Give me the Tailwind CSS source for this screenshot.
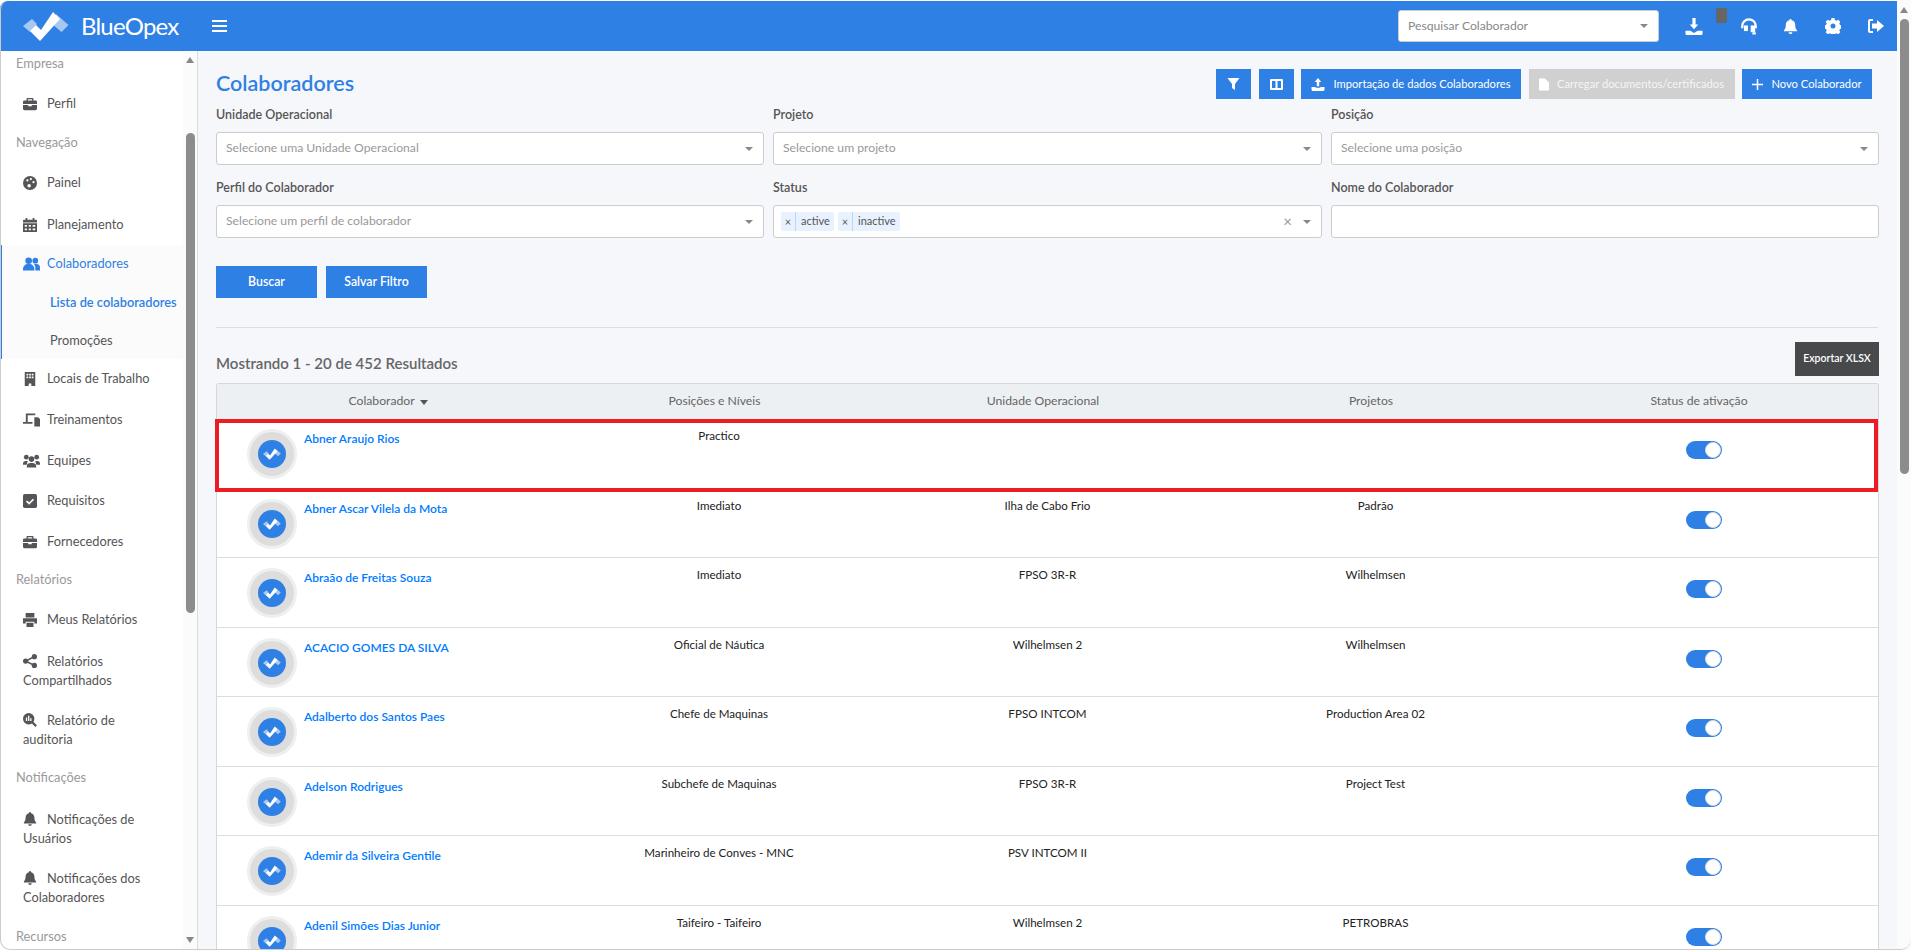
<!DOCTYPE html>
<html lang="pt-BR">
<head>
<meta charset="UTF-8">
<title>Colaboradores</title>
<script src="https://cdn.jsdelivr.net/npm/@tailwindcss/browser@4"></script>
</head>
<body class="relative h-[950px] w-[1911px] overflow-hidden bg-white font-['Lato',sans-serif] text-[12.8px] text-[#555]">
<svg class="hidden">
  <symbol id="logo" viewBox="0 0 46 30">
    <path d="M0 15 L9 8 L14 13 L7 21 Z M33 3 L45.500 14 L38.500 21 L28 12 Z" fill="#a8c8f2"/>
    <path d="M17 30 L7 20 L13 14 L18 19 L30 1 L37 8 Z" fill="#fff"/>
  </symbol>
  <symbol id="bell" viewBox="0 0 16 16"><path d="M8 0a1.200 1.200 0 0 1 1.200 1.300C11.500 1.800 13 3.700 13 6c0 4 1.200 5 2 6v1H1v-1c.8-1 2-2 2-6 0-2.300 1.500-4.200 3.800-4.700A1.200 1.200 0 0 1 8 0zM6 14h4a2 2 0 0 1-4 0z" fill="currentColor"/></symbol>
  <symbol id="case" viewBox="0 0 16 16"><path d="M5 1h6a1 1 0 0 1 1 1v2h2.500A1.500 1.500 0 0 1 16 5.500V8H0V5.500A1.500 1.500 0 0 1 1.500 4H4V2a1 1 0 0 1 1-1zm.500 1.500V4h5V2.500zM0 9h6v1.500h4V9h6v4.500a1.500 1.500 0 0 1-1.500 1.500h-13A1.500 1.500 0 0 1 0 13.500z" fill="currentColor"/></symbol>
</svg>

<header class="mt-px flex h-[50px] items-center rounded-t-lg bg-[#2f80e4] text-white">
  <div class="flex w-[198px] items-center pl-[23px]">
    <svg class="h-[30px] w-[46px]"><use href="#logo"/></svg>
    <span class="ml-[12px] text-[24px] leading-none tracking-[-0.8px]">BlueOpex</span>
  </div>
  <button class="ml-[14px] flex w-[15px] flex-col gap-[3px]">
    <span class="h-[2px] w-[15px] bg-white"></span><span class="h-[2px] w-[15px] bg-white"></span><span class="h-[2px] w-[15px] bg-white"></span>
  </button>
  <div class="ml-[1171px] flex h-[32px] w-[261px] items-center justify-between rounded-[3px] border border-[#ccc] bg-white pl-[9px] pr-[10px] text-[12.2px] text-[#888]">
    <span>Pesquisar Colaborador</span><span class="h-0 w-0 border-x-4 border-t-4 border-x-transparent border-t-[#888]"></span>
  </div>
  <div class="relative ml-[26px] flex items-center">
    <svg class="h-[17px] w-[18px]" viewBox="0 0 16 16" fill="#fff"><path d="M6.500 0h3v6H12L8 10.500 4 6h2.500zM0 12h4.500L8 14l3.500-2H16v3a1 1 0 0 1-1 1H1a1 1 0 0 1-1-1z"/></svg>
    <svg class="ml-[37px] h-[18px] w-[18px]" viewBox="0 0 16 16" fill="none" stroke="#fff" stroke-width="2"><path d="M2 10V8a6 6 0 0 1 12 0v2M11 14.500h3"/><rect x="4" y="8" width="2.500" height="4" fill="#fff" stroke-width="1"/><rect x="10" y="8" width="3" height="5" fill="#fff" stroke-width="1"/></svg>
    <svg class="ml-[25px] h-[17px] w-[15px] text-white"><use href="#bell"/></svg>
    <svg class="ml-[27px] h-[16px] w-[16px]" viewBox="0 0 16 16"><path fill="#fff" fill-rule="evenodd" d="M6.500 0h3l.4 2 1.500.7 1.800-1 2.100 2.100-1 1.800.7 1.500 2 .4v3l-2 .4-.7 1.500 1 1.800-2.100 2.100-1.800-1-1.500.7-.4 2h-3l-.4-2-1.500-.7-1.800 1-2.100-2.100 1-1.800-.7-1.500-2-.4v-3l2-.4.7-1.500-1-1.800 2.100-2.100 1.800 1 1.500-.7zM8 5.500a2.500 2.500 0 1 0 0 5 2.500 2.500 0 0 0 0-5z"/></svg>
    <svg class="ml-[26px] h-[14px] w-[17px]" viewBox="0 0 17 14" fill="#fff"><path d="M6 2H3v10h3v2H3a2 2 0 0 1-2-2V2a2 2 0 0 1 2-2h3zM10 1l7 6-7 6V9.500H5v-5h5z"/></svg>
    <span class="absolute left-[31px] top-[-9px] h-[15px] w-[11px] rounded-b-[2px] bg-[#666]"></span>
  </div>
</header>

<div class="flex h-[899px]">
  <aside class="relative h-full w-[198px] shrink-0 overflow-hidden border-r border-[#ddd] bg-white">
    <nav class="h-full w-[183px] overflow-hidden">
      <p class="flex h-[26px] items-center pl-[16px] text-[#999]">Empresa</p>
      <a class="flex h-[54px] items-center pl-[23px]"><svg class="mr-[10px] h-[14px] w-[14px]"><use href="#case"/></svg>Perfil</a>
      <p class="flex h-[24px] items-center pl-[16px] text-[#999]">Navegação</p>
      <a class="mt-[7px] flex h-[42px] items-center pl-[23px]"><svg class="mr-[10px] h-[14px] w-[14px]" viewBox="0 0 16 16"><circle cx="8" cy="8" r="8" fill="#555"/><circle cx="5" cy="5" r="1.300" fill="#fff"/><circle cx="9" cy="3.500" r="1.300" fill="#fff"/><circle cx="12" cy="7" r="1.300" fill="#fff"/><circle cx="7" cy="11" r="2" fill="#fff"/></svg>Painel</a>
      <a class="flex h-[41px] items-center pl-[23px]"><svg class="mr-[10px] h-[14px] w-[14px]" viewBox="0 0 16 16" fill="#555" fill-rule="evenodd"><path d="M3 0h2v2h6V0h2v2h2a1 1 0 0 1 1 1v2H0V3a1 1 0 0 1 1-1h2zM0 6h16v9a1 1 0 0 1-1 1H1a1 1 0 0 1-1-1zm2 2v2h2.500V8zm4.500 0v2H9V8zM11 8v2h3V8zm-9 4v2h2.500v-2zm4.500 0v2H9v-2zm4.500 0v2h3v-2z"/></svg>Planejamento</a>
      <div class="border-l-2 border-[#2f80e4] bg-[#fbfbfb]">
        <a class="flex h-[38px] items-center pl-[21px] text-[#2f80e4]"><svg class="mr-[7px] h-[14px] w-[17px]" viewBox="0 0 18 14" fill="#2f80e4"><circle cx="6" cy="3.500" r="3.500"/><circle cx="13" cy="3.500" r="3"/><path d="M0 14v-2a5 5 0 0 1 5-5h2a5 5 0 0 1 5 5v2zM13 14v-3c0-1.500-.5-3-1.500-4H14a4 4 0 0 1 4 4v3z"/></svg>Colaboradores</a>
        <a class="flex h-[40px] items-center whitespace-nowrap pl-[48px] font-semibold text-[#2f80e4]">Lista de colaboradores</a>
        <a class="flex h-[36px] items-center pl-[48px]">Promoções</a>
      </div>
      <a class="flex h-[40px] items-center pl-[23px]"><svg class="mr-[10px] h-[14px] w-[14px]" viewBox="0 0 16 16" fill="#555"><path d="M2 0h12v16H9.500v-3h-3v3H2zm2 2v2h2V2zm3 0v2h2V2zm3 0v2h2V2zM4 5v2h2V5zm3 0v2h2V5zm3 0v2h2V5z" fill-rule="evenodd"/></svg>Locais de Trabalho</a>
      <a class="flex h-[41px] items-center pl-[23px]"><svg class="mr-[7px] h-[14px] w-[17px]" viewBox="0 0 18 14" fill="#555"><path d="M3 0h10v2H5v7h5v2H0V9h3zM12 4h4l2 2v8h-6z"/></svg>Treinamentos</a>
      <a class="flex h-[41px] items-center pl-[23px]"><svg class="mr-[7px] h-[14px] w-[17px]" viewBox="0 0 18 14" fill="#555"><circle cx="3.500" cy="3" r="2.500"/><circle cx="14.500" cy="3" r="2.500"/><circle cx="9" cy="5" r="3"/><path d="M0 10a3 3 0 0 1 3-3h2L4 11H0zM4 14v-1a4 4 0 0 1 4-4h2a4 4 0 0 1 4 4v1zM18 10a3 3 0 0 0-3-3h-2l1 4h4z"/></svg>Equipes</a>
      <a class="flex h-[40px] items-center pl-[23px]"><svg class="mr-[10px] h-[14px] w-[14px]" viewBox="0 0 16 16"><rect width="16" height="16" rx="2" fill="#555"/><path d="M4 8l3 3 5-5" fill="none" stroke="#fff" stroke-width="2"/></svg>Requisitos</a>
      <a class="flex h-[41px] items-center pl-[23px]"><svg class="mr-[10px] h-[14px] w-[14px]"><use href="#case"/></svg>Fornecedores</a>
      <p class="flex h-[36px] items-center pl-[16px] text-[#999]">Relatórios</p>
      <a class="flex h-[44px] items-center pl-[23px]"><svg class="mr-[10px] h-[14px] w-[14px]" viewBox="0 0 16 16" fill="#555"><path d="M3 0h10v5H3zM0 6h16v6h-3v-2H3v2H0zM4 11h8v5H4z"/></svg>Meus Relatórios</a>
      <a class="block h-[59px] px-[23px] pt-[9.500px] leading-[19px]"><svg class="mr-[10px] inline h-[14px] w-[14px] align-[-2px]" viewBox="0 0 16 16" fill="#555"><circle cx="3" cy="8" r="3"/><circle cx="13" cy="3" r="3"/><circle cx="13" cy="13" r="3"/><path d="M3 7l10-5v2L3 9zM3 7l10 5v2L3 9z"/></svg>Relatórios Compartilhados</a>
      <a class="block h-[59px] px-[23px] pt-[9.500px] leading-[19px]"><svg class="mr-[10px] inline h-[14px] w-[14px] align-[-2px]" viewBox="0 0 16 16"><circle cx="6.500" cy="6.500" r="6.500" fill="#555"/><path d="M10 10l5 5" stroke="#555" stroke-width="2.500"/><path d="M4 5v4M6.500 3v6M9 6v3" stroke="#fff" stroke-width="1.500"/></svg>Relatório de auditoria</a>
      <p class="flex h-[36px] items-center pl-[16px] text-[#999]">Notificações</p>
      <a class="block h-[51px] px-[23px] pt-[13.500px] leading-[19px]"><svg class="mr-[10px] inline h-[14px] w-[14px] align-[-2px] text-[#555]"><use href="#bell"/></svg>Notificações de Usuários</a>
      <a class="block h-[60px] px-[23px] pt-[21.500px] leading-[19px]"><svg class="mr-[10px] inline h-[14px] w-[14px] align-[-2px] text-[#555]"><use href="#bell"/></svg>Notificações dos Colaboradores</a>
      <p class="pl-[16px] pt-[20px] leading-[18px] text-[#999]">Recursos</p>
    </nav>
    <div class="absolute right-0 top-0 h-full w-[14px] bg-[#fbfbfb]">
      <span class="absolute left-[3px] top-[6px] h-0 w-0 border-x-4 border-b-[6px] border-x-transparent border-b-[#888]"></span>
      <span class="absolute left-[3px] top-[82px] h-[480px] w-[9px] rounded-full bg-[#8c8c8c]"></span>
      <span class="absolute bottom-[7px] left-[3px] h-0 w-0 border-x-4 border-t-[6px] border-x-transparent border-t-[#888]"></span>
    </div>
  </aside>

  <main class="relative min-w-0 flex-1 bg-[#f5f7fb]">
    <div class="w-[1681px] pl-[18px]">
      <div class="flex items-center pt-[18px]">
        <h1 class="-mt-[2px] text-[21.500px] font-semibold leading-[26px] text-[#2f80e4]">Colaboradores</h1>
        <div class="ml-auto mr-[7px] flex h-[30px] gap-[7.500px] text-[11.200px] text-white">
          <button class="flex w-[35px] items-center justify-center bg-[#2f80e4]"><svg class="h-[12px] w-[13px]" viewBox="0 0 12 12" fill="#fff"><path d="M0 0h12L7.500 6v6l-3-2V6z"/></svg></button>
          <button class="flex w-[35px] items-center justify-center bg-[#2f80e4]"><svg class="h-[11px] w-[13px]" viewBox="0 0 13 11" fill="#fff" fill-rule="evenodd"><path d="M1 0h11a1 1 0 0 1 1 1v9a1 1 0 0 1-1 1H1a1 1 0 0 1-1-1V1a1 1 0 0 1 1-1zm1 2v7h3.500V2zm5.500 0v7H11V2z"/></svg></button>
          <button class="flex w-[220px] items-center justify-center gap-[8px] bg-[#2f80e4]"><svg class="h-[13px] w-[14px]" viewBox="0 0 16 16" fill="#fff"><path d="M6.500 10h3V5H12L8 0 4 5h2.500zM0 11h5v1h6v-1h5v3a2 2 0 0 1-2 2H2a2 2 0 0 1-2-2z"/></svg>Importação de dados Colaboradores</button>
          <button class="flex w-[206px] items-center justify-center gap-[8px] bg-[#d0d0d0] text-[#f5f5f5]"><svg class="h-[13px] w-[10px]" viewBox="0 0 10 12" fill="#fff"><path d="M0 0h6l4 4v8H0z"/></svg>Carregar documentos/certificados</button>
          <button class="flex w-[130px] items-center justify-center gap-[8px] bg-[#2f80e4]"><svg class="h-[11px] w-[11px]" viewBox="0 0 11 11" stroke="#fff" stroke-width="1.500"><path d="M5.500 0v11M0 5.500h11"/></svg>Novo Colaborador</button>
        </div>
      </div>

      <div class="mt-[6px] grid grid-cols-[548px_549px_548px] gap-x-[9px] text-[12.500px] font-semibold">
        <div class="h-[73px]">
          <label class="block leading-[20px] text-[#555]">Unidade Operacional</label>
          <div class="mt-[7px] flex h-[33px] items-center justify-between rounded-[3px] border border-[#ccc] bg-white pl-[9px] pr-[10px] text-[12.200px] font-normal text-[#999]"><span>Selecione uma Unidade Operacional</span><span class="h-0 w-0 border-x-4 border-t-4 border-x-transparent border-t-[#888]"></span></div>
        </div>
        <div class="h-[73px]">
          <label class="block leading-[20px] text-[#555]">Projeto</label>
          <div class="mt-[7px] flex h-[33px] items-center justify-between rounded-[3px] border border-[#ccc] bg-white pl-[9px] pr-[10px] text-[12.200px] font-normal text-[#999]"><span>Selecione um projeto</span><span class="h-0 w-0 border-x-4 border-t-4 border-x-transparent border-t-[#888]"></span></div>
        </div>
        <div class="h-[73px]">
          <label class="block leading-[20px] text-[#555]">Posição</label>
          <div class="mt-[7px] flex h-[33px] items-center justify-between rounded-[3px] border border-[#ccc] bg-white pl-[9px] pr-[10px] text-[12.200px] font-normal text-[#999]"><span>Selecione uma posição</span><span class="h-0 w-0 border-x-4 border-t-4 border-x-transparent border-t-[#888]"></span></div>
        </div>
        <div class="h-[73px]">
          <label class="block leading-[20px] text-[#555]">Perfil do Colaborador</label>
          <div class="mt-[7px] flex h-[33px] items-center justify-between rounded-[3px] border border-[#ccc] bg-white pl-[9px] pr-[10px] text-[12.200px] font-normal text-[#999]"><span>Selecione um perfil de colaborador</span><span class="h-0 w-0 border-x-4 border-t-4 border-x-transparent border-t-[#888]"></span></div>
        </div>
        <div class="h-[73px]">
          <label class="block leading-[20px] text-[#555]">Status</label>
          <div class="mt-[7px] flex h-[33px] items-center rounded-[3px] border border-[#ccc] bg-white pl-[7px] pr-[10px] text-[11px] font-normal text-[#555]">
            <span class="flex h-[19px] w-[53px] items-center rounded-[2px] bg-[#e8f2ff]"><span class="w-[15px] border-r border-[#b8d8f8] text-center leading-[19px]">×</span><span class="pl-[5px]">active</span></span>
            <span class="ml-[4px] flex h-[19px] w-[62px] items-center rounded-[2px] bg-[#e8f2ff]"><span class="w-[15px] border-r border-[#b8d8f8] text-center leading-[19px]">×</span><span class="pl-[5px]">inactive</span></span>
            <span class="ml-auto mr-[11px] text-[15px] text-[#999]">×</span><span class="h-0 w-0 border-x-4 border-t-4 border-x-transparent border-t-[#888]"></span>
          </div>
        </div>
        <div class="h-[73px]">
          <label class="block leading-[20px] text-[#555]">Nome do Colaborador</label>
          <div class="mt-[7px] h-[33px] rounded-[3px] border border-[#ccc] bg-white"></div>
        </div>
      </div>

      <div class="mt-[15px] mr-[1px] flex gap-[9px] border-b border-[#ddd] pb-[29px] text-[12.300px] font-semibold text-white">
        <button class="h-[32px] w-[101px] bg-[#2f80e4]">Buscar</button>
        <button class="h-[32px] w-[101px] bg-[#2f80e4]">Salvar Filtro</button>
      </div>

      <div class="flex items-center justify-between pt-[14px]">
        <h2 class="mt-[8px] text-[15px] font-semibold leading-[20px] text-[#666]">Mostrando 1 - 20 de 452 Resultados</h2>
        <button class="h-[34px] w-[84px] bg-[#48494b] text-[10.500px] font-semibold text-white">Exportar XLSX</button>
      </div>

      <div class="mt-[7px] w-[1663px] rounded-t-[3px] border-x border-t border-[#d5d8da] bg-white">
        <div class="grid h-[35px] grid-cols-[333px_329px_328px_328px_328px] items-center bg-[#edf0f2] text-center text-[12.200px] text-[#666]">
          <span class="pl-[9px]">Colaborador <span class="ml-[2px] inline-block h-0 w-0 border-x-4 border-t-[5px] border-x-transparent border-t-[#555] align-middle"></span></span>
          <span>Posições e Níveis</span><span>Unidade Operacional</span><span>Projetos</span><span>Status de ativação</span>
        </div>
        <div id="rows" class="relative"></div>
      </div>
    </div>
    <div class="absolute right-0 top-[-51px] h-[950px] w-[14px] bg-[#fbfbfb]">
      <span class="absolute left-[3px] top-[7px] h-0 w-0 border-x-4 border-b-[6px] border-x-transparent border-b-[#888]"></span>
      <span class="absolute left-[3px] top-[19px] h-[455px] w-[9px] rounded-full bg-[#8c8c8c]"></span>
    </div>
  </main>
</div>
<div class="pointer-events-none absolute inset-0 rounded-[10px] border-b border-l border-[#ccc]"></div>

<script>
  // linhas da tabela
  const colaboradores = [
    ["Abner Araujo Rios", "Practico", "", ""],
    ["Abner Ascar Vilela da Mota", "Imediato", "Ilha de Cabo Frio", "Padrão"],
    ["Abraão de Freitas Souza", "Imediato", "FPSO 3R-R", "Wilhelmsen"],
    ["ACACIO GOMES DA SILVA", "Oficial de Náutica", "Wilhelmsen 2", "Wilhelmsen"],
    ["Adalberto dos Santos Paes", "Chefe de Maquinas", "FPSO INTCOM", "Production Area 02"],
    ["Adelson Rodrigues", "Subchefe de Maquinas", "FPSO 3R-R", "Project Test"],
    ["Ademir da Silveira Gentile", "Marinheiro de Conves - MNC", "PSV INTCOM II", ""],
    ["Adenil Simões Dias Junior", "Taifeiro - Taifeiro", "Wilhelmsen 2", "PETROBRAS"],
  ];
  document.getElementById("rows").innerHTML = colaboradores.map(c => `
    <div class="grid h-[69.500px] grid-cols-[333px_329px_328px_328px_328px] border-b border-[#ddd] text-center text-[11.600px] text-[#222]">
      <div class="flex pt-[10px] text-left">
        <span class="ml-[30px] flex h-[50px] w-[50px] shrink-0 items-center justify-center rounded-full border-[3px] border-[#efefef] bg-[#ddd]">
          <span class="flex h-[28px] w-[28px] items-center justify-center rounded-full bg-[#2f80e4]">
            <svg class="h-[12px] w-[18px]"><use href="#logo"/></svg>
          </span>
        </span>
        <a class="ml-[7px] text-[12px] font-semibold leading-[20px] text-[#007bff]">${c[0]}</a>
      </div>
      <div class="pl-[9px] pt-[7px] leading-[20px]">${c[1]}</div><div class="pl-[9px] pt-[7px] leading-[20px]">${c[2]}</div><div class="pl-[9px] pt-[7px] leading-[20px]">${c[3]}</div>
      <div class="flex justify-center pl-[10px] pt-[22px]">
        <span class="flex h-[18px] w-[36px] items-center justify-end rounded-full bg-[#2f80e4] pr-[1px]"><span class="h-[16px] w-[16px] rounded-full border border-[#ddd] bg-white"></span></span>
      </div>
    </div>`).join("") + `<div class="absolute left-[-2px] top-0 h-[73px] w-[1663px] border-4 border-[#ed1c24]"></div>`;
</script>
</body>
</html>
